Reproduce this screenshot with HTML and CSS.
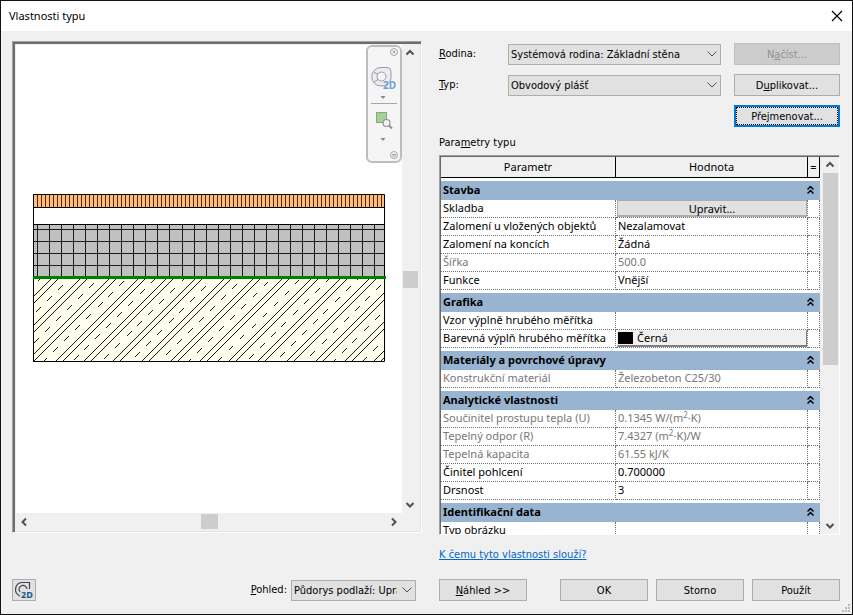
FILE: index.html
```html
<!DOCTYPE html>
<html lang="cs">
<head>
<meta charset="utf-8">
<title>Vlastnosti typu</title>
<link rel="stylesheet" href="styles.css">
</head>
<body>
<div class="dialog">
  <header class="titlebar">
    <h1>Vlastnosti typu</h1>
    <button class="close" type="button" aria-label="Zavřít">
      <svg width="12" height="12" viewBox="0 0 12 12"><path d="M1 1l10 10M11 1L1 11" fill="none" stroke="#000" stroke-width="1.2"/></svg>
    </button>
  </header>

  <main class="content">
    <section class="preview">
      <div class="canvas">
        <svg class="wall" width="353" height="168" viewBox="0 0 353 168">
          <defs>
            <pattern id="brick" width="4" height="14" patternUnits="userSpaceOnUse">
              <rect width="4" height="14" fill="#ffbe80"/><rect width="1" height="14" fill="#552400"/>
            </pattern>
            <pattern id="blockA" x="4" y="35" width="12" height="12" patternUnits="userSpaceOnUse">
              <rect width="12" height="12" fill="#c0c0c0"/><path d="M0 0h12v1H1v11H0z" fill="#1c1c1c"/>
            </pattern>
            <pattern id="blockB" x="5" y="35" width="12" height="12" patternUnits="userSpaceOnUse">
              <rect width="12" height="12" fill="#c0c0c0"/><path d="M0 0h12v1H1v11H0z" fill="#1c1c1c"/>
            </pattern>
            <clipPath id="slab"><rect y="85" width="352" height="83"/></clipPath>
          </defs>
          <rect width="352" height="168" fill="#fff"/>
          <rect width="352" height="14" fill="url(#brick)"/>
          <rect y="30" width="143" height="53" fill="url(#blockA)"/>
          <rect x="143" y="30" width="209" height="53" fill="url(#blockB)"/>
          <rect y="85" width="352" height="83" fill="#ffffee"/>
          <g clip-path="url(#slab)">
            <g transform="rotate(-45)" fill="none" stroke="#1c1c14" stroke-width="1" shape-rendering="crispEdges">
              <path d="M-130 72.650h400M-130 93.100h400M-130 113.550h400M-130 134h400M-130 154.450h400M-130 174.900h400M-130 195.350h400M-130 215.800h400M-130 236.250h400M-130 256.700h400M-130 277.150h400M-130 297.600h400M-130 318.050h400M-130 338.500h400M-130 358.950h400"/>
              <path d="M-130 77.600h400M-130 98.050h400M-130 118.500h400M-130 138.950h400M-130 159.400h400M-130 179.850h400M-130 200.300h400M-130 220.750h400M-130 241.200h400M-130 261.650h400M-130 282.100h400M-130 302.550h400M-130 323h400M-130 343.450h400M-130 363.900h400"/>
              <path stroke-dasharray="7 8.560" d="M-127.980 85.300h400M-127.980 126.200h400M-127.980 167.100h400M-127.980 208h400M-127.980 248.900h400M-127.980 289.800h400M-127.980 330.700h400M-135.760 64.850h400M-135.760 105.750h400M-135.760 146.650h400M-135.760 187.550h400M-135.760 228.450h400M-135.760 269.350h400M-135.760 310.250h400M-135.760 351.150h400"/>
            </g>
          </g>
          <path d="M0 13.5h352M0 30.5h352M.5.5h351v167H.5z" fill="none" stroke="#000"/>
          <rect y="82" width="353" height="3" fill="#008000"/>
        </svg>

        <div class="navbar">
          <svg width="36" height="118" viewBox="0 0 36 118">
            <g fill="none" stroke="#a6a6a6">
              <circle cx="28" cy="7" r="3.5"/><path d="M26.500 5.500l3 3M29.500 5.500l-3 3"/>
              <circle cx="28" cy="110" r="3.500"/><path d="M26 109.500h4M26 111h4"/>
              <path d="M5 58.500h26"/>
            </g>
            <path d="M15 22.500h6q4 0 4 4v7a10 9 0 0 1-10 7.500 9.200 9.200 0 0 1 0-18.500z" fill="#ececf0" stroke="#9899a5"/>
            <circle cx="15.500" cy="31.500" r="4.500" fill="#f5f5f5" stroke="#9899a5"/>
            <path d="M8 27.500l4 1.500M8 37l4-2.500" stroke="#9899a5" fill="none"/>
            <text class="tag-light" x="17" y="44">2D</text>
            <path d="M14.500 51h5L17 54z" fill="#888"/>
            <rect x="10.500" y="67.500" width="10" height="10" fill="#abcf9b" stroke="#7fae71"/>
            <circle cx="20.500" cy="78" r="3.500" fill="#eff3f7" stroke="#8d9299" stroke-width="1.200"/>
            <path d="M23 80.500l3 3" stroke="#8d9299" stroke-width="2"/>
            <path d="M14.500 93h5L17 96z" fill="#888"/>
          </svg>
        </div>
      </div>
      <div class="vbar">
        <svg class="arrow" viewBox="0 0 16 16"><path d="M4.500 9.500L8 6l3.500 3.500"/></svg>
        <span class="thumb"></span>
        <svg class="arrow" viewBox="0 0 16 16"><path d="M4.500 6L8 9.500 11.500 6"/></svg>
      </div>
      <div class="hbar">
        <svg class="arrow" viewBox="0 0 16 16"><path d="M10 4.500L6.500 8l3.500 3.500"/></svg>
        <span class="thumb"></span>
        <svg class="arrow" viewBox="0 0 16 16"><path d="M6 4.500L9.500 8 6 11.500"/></svg>
      </div>
    </section>

    <section class="settings">
      <div class="form">
        <label for="family"><u>R</u>odina:</label>
        <span class="combo">
          <select id="family"><option>Systémová rodina: Základní stěna</option></select>
          <svg width="10" height="6" viewBox="0 0 10 6"><path d="M.5.500L5 5 9.500.500"/></svg>
        </span>
        <button class="btn" type="button" disabled>N<u>a</u>číst...</button>
        <label for="type"><u>T</u>yp:</label>
        <span class="combo">
          <select id="type"><option>Obvodový plášť</option></select>
          <svg width="10" height="6" viewBox="0 0 10 6"><path d="M.5.500L5 5 9.500.500"/></svg>
        </span>
        <button class="btn" type="button">D<u>u</u>plikovat...</button>
        <button class="btn focused" type="button">Pře<u>j</u>menovat...</button>
      </div>

      <h2>Para<u>m</u>etry typu</h2>

      <div class="params">
        <div class="viewport">
          <table>
            <colgroup><col class="c-name"><col><col class="c-eq"></colgroup>
            <thead>
              <tr><th>Parametr</th><th>Hodnota</th><th>=</th></tr>
            </thead>
            <tbody>
              <tr class="group"><th colspan="3"><span>Stavba<svg width="7" height="8" viewBox="0 0 7 8"><path d="M.5 3.500l3-3 3 3M.5 7.500l3-3 3 3"/></svg></span></th></tr>
              <tr><td>Skladba</td><td class="control"><button class="edit" type="button">Upravit...</button></td><td></td></tr>
              <tr><td>Zalomení u vložených objektů</td><td>Nezalamovat</td><td></td></tr>
              <tr><td>Zalomení na koncích</td><td>Žádná</td><td></td></tr>
              <tr class="readonly"><td>Šířka</td><td>500.0</td><td></td></tr>
              <tr><td>Funkce</td><td>Vnější</td><td></td></tr>
              <tr class="group"><th colspan="3"><span>Grafika<svg width="7" height="8" viewBox="0 0 7 8"><path d="M.5 3.500l3-3 3 3M.5 7.500l3-3 3 3"/></svg></span></th></tr>
              <tr><td>Vzor výplně hrubého měřítka</td><td></td><td></td></tr>
              <tr><td>Barevná výplň hrubého měřítka</td><td class="control"><button class="edit color" type="button"><span class="swatch"></span>Černá</button></td><td></td></tr>
              <tr class="group"><th colspan="3"><span>Materiály a povrchové úpravy<svg width="7" height="8" viewBox="0 0 7 8"><path d="M.5 3.500l3-3 3 3M.5 7.500l3-3 3 3"/></svg></span></th></tr>
              <tr class="readonly"><td>Konstrukční materiál</td><td>Železobeton C25/30</td><td></td></tr>
              <tr class="group"><th colspan="3"><span>Analytické vlastnosti<svg width="7" height="8" viewBox="0 0 7 8"><path d="M.5 3.500l3-3 3 3M.5 7.500l3-3 3 3"/></svg></span></th></tr>
              <tr class="readonly"><td>Součinitel prostupu tepla (U)</td><td>0.1345 W/(m<sup>2</sup>·K)</td><td></td></tr>
              <tr class="readonly"><td>Tepelný odpor (R)</td><td>7.4327 (m<sup>2</sup>·K)/W</td><td></td></tr>
              <tr class="readonly"><td>Tepelná kapacita</td><td>61.55 kJ/K</td><td></td></tr>
              <tr><td>Činitel pohlcení</td><td>0.700000</td><td></td></tr>
              <tr><td>Drsnost</td><td>3</td><td></td></tr>
              <tr class="group"><th colspan="3"><span>Identifikační data<svg width="7" height="8" viewBox="0 0 7 8"><path d="M.5 3.500l3-3 3 3M.5 7.500l3-3 3 3"/></svg></span></th></tr>
              <tr><td>Typ obrázku</td><td></td><td></td></tr>
            </tbody>
          </table>
        </div>
        <div class="vbar">
          <svg class="arrow" viewBox="0 0 16 16"><path d="M4.500 9.500L8 6l3.500 3.500"/></svg>
          <span class="thumb"></span>
          <svg class="arrow" viewBox="0 0 16 16"><path d="M4.500 6L8 9.500 11.500 6"/></svg>
        </div>
      </div>

      <a class="help" href="#">K čemu tyto vlastnosti slouží?</a>
    </section>
  </main>

  <footer class="footer">
    <div class="view">
      <button class="btn wheel" type="button" aria-label="2D">
        <svg width="20" height="20" viewBox="0 0 20 20">
          <path d="M6 16a7 7 0 0 1 2-13.500h7.500V9" fill="none" stroke="#3c4450" stroke-width="1.200"/>
          <path d="M6 12a4 4 0 1 1 7-3" fill="none" stroke="#3c4450" stroke-width="1.200"/>
          <text class="tag" x="7" y="18">2D</text>
        </svg>
      </button>
      <label for="view"><u>P</u>ohled:</label>
      <span class="combo">
        <select id="view"><option>Půdorys podlaží: Upravit</option></select>
        <svg width="10" height="6" viewBox="0 0 10 6"><path d="M.5.500L5 5 9.500.500"/></svg>
      </span>
    </div>
    <div class="actions">
      <button class="btn" type="button"><u>N</u>áhled &gt;&gt;</button>
      <button class="btn ok" type="button">OK</button>
      <button class="btn" type="button">Storno</button>
      <button class="btn" type="button">Použít</button>
    </div>
    <svg class="grip" width="9" height="9" viewBox="0 0 9 9"><path d="M6 0h2v2H6zM3 3h2v2H3zM6 3h2v2H6zM0 6h2v2H0zM3 6h2v2H3zM6 6h2v2H6z" fill="#bcbcbc"/></svg>
  </footer>
</div>
</body>
</html>
```
FILE: styles.css
```css
* { box-sizing: border-box; }

body {
  margin: 0;
  font: 11px/16px "DejaVu Sans Condensed", "Noto Sans", sans-serif;
  color: #000;
}

button, select {
  font: inherit;
  color: inherit;
  margin: 0;
}

svg { display: block; flex: none; }

.dialog {
  position: relative;
  display: flex;
  flex-direction: column;
  height: 100vh;
  border: 1px solid #111;
  background: #f0f0f0;
}

.titlebar {
  display: flex;
  align-items: center;
  justify-content: space-between;
  height: 30px;
  padding: 0 9px 0 8px;
  background: #fff;
}

.titlebar h1 {
  margin: 0;
  font: 400 11px/16px "Noto Sans", "Open Sans", sans-serif;
}

.close {
  padding: 0;
  border: 0;
  background: none;
}

.content, .footer {
  display: grid;
  grid-template-columns: minmax(0, 410fr) minmax(0, 401fr);
  column-gap: 17px;
  padding: 0 12px 0 11px;
}

.content { flex: 1; min-height: 0; padding-top: 10px; }

/* Preview pane */
.preview {
  display: grid;
  grid-template: minmax(0, 1fr) 17px / minmax(0, 1fr) 16px;
  margin-bottom: 46px;
  border: 1px solid #a0a0a0;
  border-right-color: #fff;
  border-bottom-color: #fff;
  box-shadow: inset 2px 2px #6e6e6e, inset -1px -1px #e3e3e3;
  padding: 3px 3px 2px;
}

.canvas {
  position: relative;
  display: flex;
  align-items: center;
  justify-content: center;
  padding: 0 0 3px 1px;
  background: #fff;
}

.navbar {
  position: absolute;
  top: 0;
  right: 0;
  border: 2px solid #bdbdbd;
  border-radius: 6px;
  background: #f5f5f5;
}

.navbar svg { margin: -2px; }

.tag, .tag-light {
  font: 700 9px "Noto Sans", sans-serif;
  fill: #1b5590;
}

.tag-light { font-size: 10px; fill: #6d9fd0; }

.vbar, .hbar {
  display: flex;
  align-items: center;
  justify-content: space-between;
  background: #f0f0f0;
}

.vbar { flex-direction: column; }
.thumb { background: #cdcdcd; }
.preview .vbar .thumb { width: 15px; height: 17px; }
.hbar .thumb { width: 17px; height: 15px; }

.arrow {
  width: 16px;
  height: 16px;
  fill: none;
  stroke: #505050;
  stroke-width: 2;
}

/* Family and type */
.settings {
  display: flex;
  flex-direction: column;
  min-height: 0;
}

.form {
  display: grid;
  grid-template-columns: 69px minmax(0, 1fr) 106px;
  grid-auto-rows: 22px;
  align-items: center;
  row-gap: 9px;
  padding-top: 2px;
}

.form .combo { margin-right: 13px; }
.form .focused { grid-column: 3; }

.combo {
  display: grid;
  align-items: center;
  min-width: 0;
}

.combo > * { grid-area: 1 / 1; }

.combo select {
  width: 100%;
  height: 21px;
  padding: 1px 18px 0 2px;
  border: 1px solid #adadad;
  border-radius: 0;
  background: #e1e1e1;
  appearance: none;
}

.combo svg {
  justify-self: end;
  margin-right: 4px;
  fill: none;
  stroke: #505050;
  pointer-events: none;
}

.btn {
  height: 22px;
  padding: 2px 0 0;
  border: 1px solid #adadad;
  background: #e1e1e1;
  line-height: 16px;
}

.btn:disabled {
  border-color: #bfbfbf;
  background: #ccc;
  color: #8f8f8f;
}

.btn.focused {
  border: 2px solid #0078d7;
  outline: 1px dotted #000;
  outline-offset: -3px;
}

h2 {
  margin: 8px 0 4px;
  font: inherit;
}

/* Parameter table */
.params {
  display: flex;
  flex: 1;
  min-height: 0;
  border: 1px solid #a0a0a0;
  border-right-color: #fff;
  border-bottom-color: #fff;
  box-shadow: inset 1px 1px #696969;
  padding: 1px 1px 0 1px;
}

.viewport {
  flex: 1;
  min-width: 0;
  margin-right: 2px;
  overflow: hidden;
  background: #fff;
}

table {
  width: 100%;
  table-layout: fixed;
  border-spacing: 0;
  font-family: "Noto Sans", "Open Sans", sans-serif;
}

.c-name { width: 175px; }
.c-eq { width: 12px; }

thead th {
  height: 21px;
  padding: 0;
  border-right: 1px solid #000;
  border-bottom: 1px solid #000;
  background: #f0f0f0;
  font-weight: 400;
}

td {
  height: 18px;
  padding: 0 0 0 2px;
  border-right: 1px dotted #707070;
  border-bottom: 1px dotted #707070;
  vertical-align: top;
  white-space: nowrap;
}

.group th {
  height: 22px;
  padding: 0 6px 0 2px;
  border-top: 3px solid #fff;
  background: #99b4d1;
  vertical-align: top;
  line-height: 17px;
  text-align: left;
}

.group span {
  display: flex;
  align-items: center;
  justify-content: space-between;
}

.group svg {
  fill: none;
  stroke: #000;
  stroke-width: 1.5;
}

.readonly { color: #777; }

sup {
  font-size: 8px;
  line-height: 0;
  vertical-align: 4px;
}

.control { padding: 0 0 0 1px; }

.edit {
  display: block;
  width: 100%;
  height: 17px;
  padding: 0;
  border: 1px solid #adadad;
  border-bottom-width: 2px;
  background: #e1e1e1;
  line-height: 16px;
}

.edit.color {
  display: flex;
  align-items: center;
  gap: 4px;
  border-color: #f0f0f0 #808080 #808080 #f0f0f0;
  background: #f0f0f0;
}

.swatch {
  width: 15px;
  height: 12px;
  background: #000;
}

.params .vbar .thumb {
  flex: 0 1 192px;
  width: 15px;
  margin-bottom: auto;
}

.help {
  align-self: flex-start;
  margin: 12px 0 16px;
  color: #0066cc;
}

/* Bottom row */
.footer { padding-bottom: 13px; }

.view {
  display: flex;
  align-items: center;
}

.view .wheel {
  width: 24px;
  margin-right: auto;
  padding: 0 1px;
}

.view .combo { width: 125px; margin: 0 6px 0 4px; }

.actions {
  display: flex;
  gap: 8px;
}

.actions .btn { flex: 0 1 88px; }
.actions .ok { margin-left: auto; }

.grip {
  position: absolute;
  right: 1px;
  bottom: 1px;
}
```
